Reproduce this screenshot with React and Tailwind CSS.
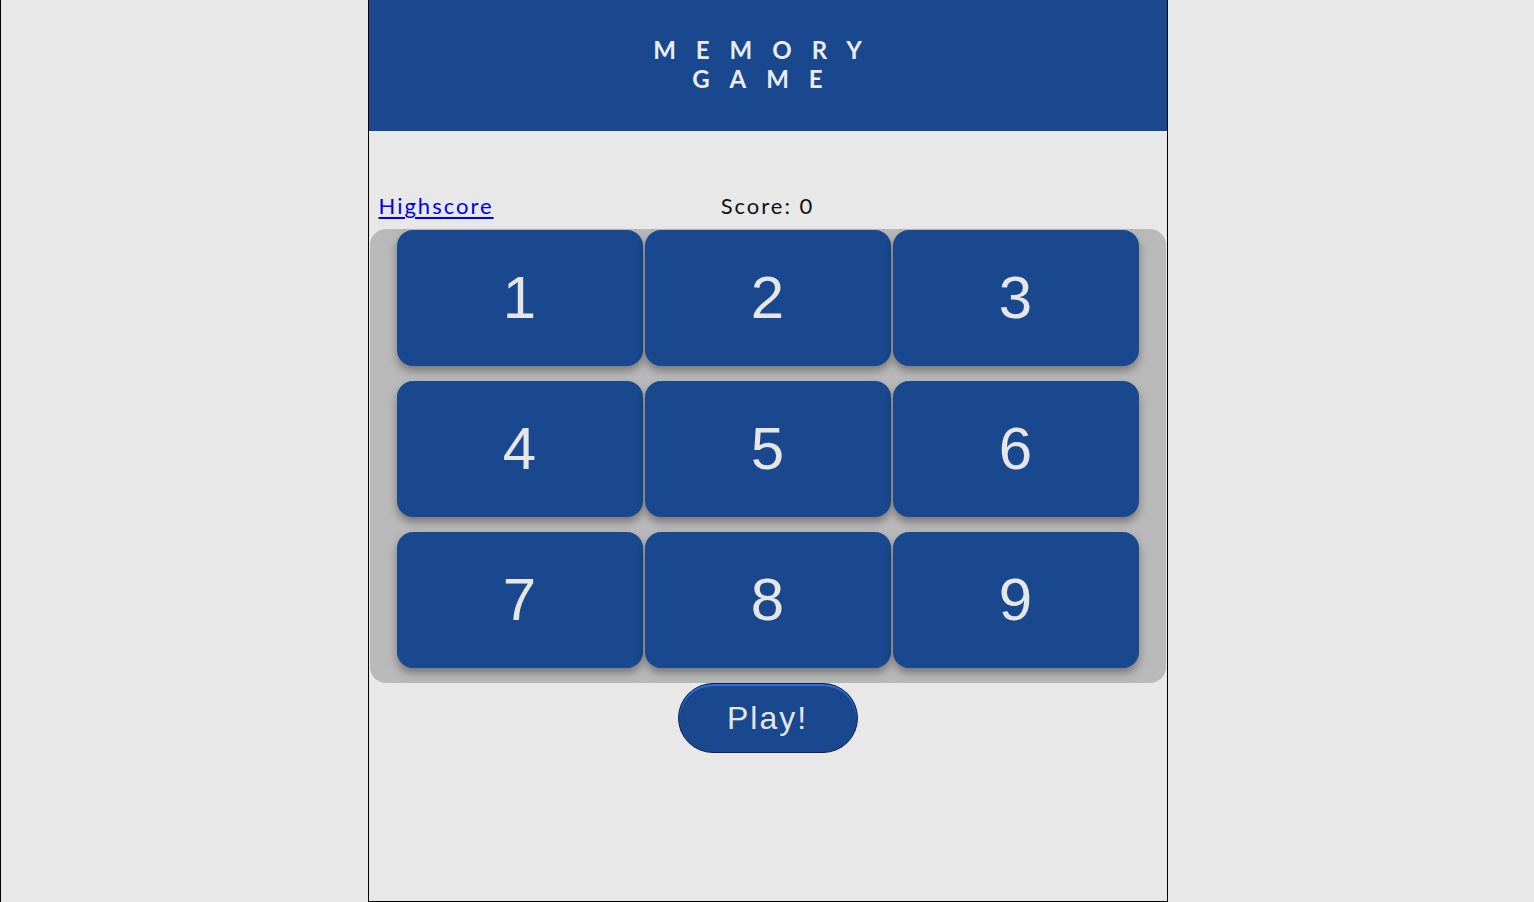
import React from "react";

const tiles = [1, 2, 3, 4, 5, 6, 7, 8, 9];

export default function App() {
  return (
    <div className="min-h-[902px] w-full bg-[#e8e8e8] border-l border-black">
      <div className="mx-auto flex h-[902px] w-[800px] flex-col border-x border-b border-black bg-[#e8e8e8]">
        <header className="flex h-[131px] shrink-0 items-center justify-center bg-[#19488e] pb-[4px]">
          <h1
            className="text-center text-[24px] font-bold leading-[29px] tracking-[20px] text-[#ececec]"
            style={{ fontFamily: "Lato, 'Liberation Sans', sans-serif" }}
          >
            MEMORY
            <br />
            GAME
          </h1>
        </header>

        <div
          className="mt-[62px] grid grid-cols-3 items-center text-[22px] leading-[26px] tracking-[2px]"
          style={{ fontFamily: "Lato, 'Liberation Sans', sans-serif" }}
        >
          <a href="#" className="pl-[10px] text-[#0000ee] underline underline-offset-[3px]">
            Highscore
          </a>
          <div className="text-center text-[#111]">Score: 0</div>
          <div />
        </div>

        <div className="mx-px mt-[10px] rounded-[16px] bg-[#b9b9b9] pt-px pb-[15px]">
          <div className="mx-auto grid w-[742px] grid-cols-3 gap-x-[2px] gap-y-[15px]">
            {tiles.map((n) => (
              <div
                key={n}
                className="flex h-[136px] items-center justify-center rounded-[16px] bg-[#19488e] text-[60px] text-[#e6e6e6] shadow-[0_5px_8px_rgba(0,0,0,0.35)]"
                style={{ fontFamily: "'Liberation Sans', Arial, sans-serif" }}
              >
                {n}
              </div>
            ))}
          </div>
        </div>

        <div className="flex justify-center">
          <button
            className="flex h-[70px] w-[180px] items-center justify-center rounded-full border border-[#0b2350] bg-[#19488e] text-[32px] tracking-[2px] text-[#e6e6e6] shadow-[inset_0_2px_1px_#2f6fd9]"
            style={{ fontFamily: "'Liberation Sans', Arial, sans-serif" }}
          >
            Play!
          </button>
        </div>
      </div>
    </div>
  );
}
